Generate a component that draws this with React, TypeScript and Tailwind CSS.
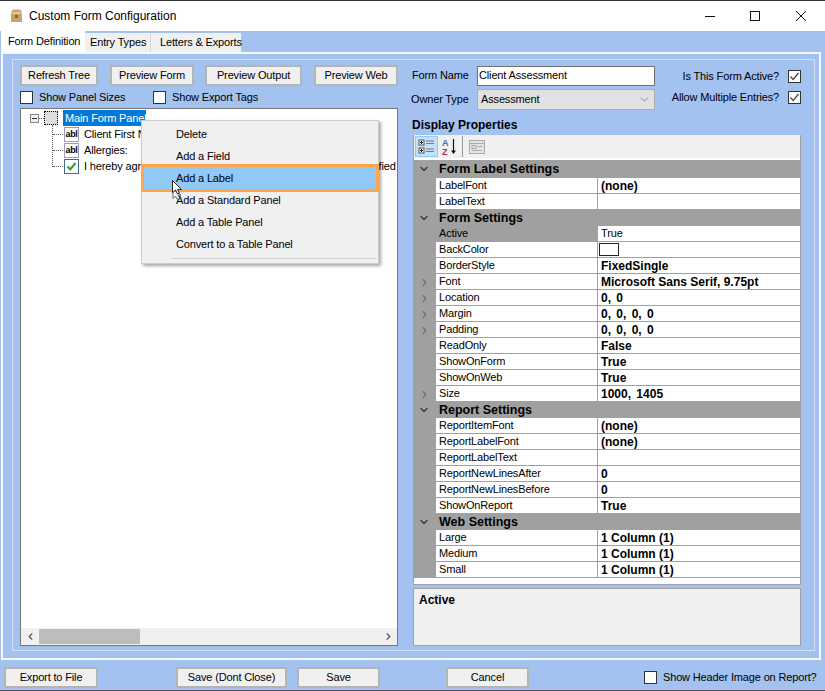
import { ChevronDown, ChevronRight, ChevronLeft } from "lucide-react"

const font = "font-['Liberation_Sans',Arial,sans-serif]"

type Row = { name: string; value?: string; bold?: boolean; num?: boolean; more?: boolean; swatch?: boolean; selected?: boolean }
type Section = { title: string; rows: Row[] }

const sections: Section[] = [
  {
    title: "Form Label Settings",
    rows: [{ name: "LabelFont", value: "(none)", bold: true }, { name: "LabelText" }],
  },
  {
    title: "Form Settings",
    rows: [
      { name: "Active", value: "True", selected: true },
      { name: "BackColor", swatch: true },
      { name: "BorderStyle", value: "FixedSingle", bold: true },
      { name: "Font", value: "Microsoft Sans Serif, 9.75pt", bold: true, more: true },
      { name: "Location", value: "0, 0", bold: true, num: true, more: true },
      { name: "Margin", value: "0, 0, 0, 0", bold: true, num: true, more: true },
      { name: "Padding", value: "0, 0, 0, 0", bold: true, num: true, more: true },
      { name: "ReadOnly", value: "False", bold: true },
      { name: "ShowOnForm", value: "True", bold: true },
      { name: "ShowOnWeb", value: "True", bold: true },
      { name: "Size", value: "1000, 1405", bold: true, num: true, more: true },
    ],
  },
  {
    title: "Report Settings",
    rows: [
      { name: "ReportItemFont", value: "(none)", bold: true },
      { name: "ReportLabelFont", value: "(none)", bold: true },
      { name: "ReportLabelText" },
      { name: "ReportNewLinesAfter", value: "0", bold: true },
      { name: "ReportNewLinesBefore", value: "0", bold: true },
      { name: "ShowOnReport", value: "True", bold: true },
    ],
  },
  {
    title: "Web Settings",
    rows: [
      { name: "Large", value: "1 Column (1)", bold: true },
      { name: "Medium", value: "1 Column (1)", bold: true },
      { name: "Small", value: "1 Column (1)", bold: true },
    ],
  },
]

const menuItems = ["Delete", "Add a Field", "Add a Label", "Add a Standard Panel", "Add a Table Panel", "Convert to a Table Panel"]

function Btn({ label, className }: { label: string; className: string }) {
  return (
    <div className={`h-[21px] shrink-0 flex items-center justify-center bg-[#f0f0f0] border-2 border-[#b4b4b4] ${className}`}>
      {label}
    </div>
  )
}

function Check({ checked }: { checked?: boolean }) {
  return (
    <span className="w-[13px] h-[13px] bg-white border border-[#333] flex items-center justify-center shrink-0">
      {checked && (
        <svg width="11" height="11" viewBox="0 0 11 11">
          <path d="M1.5 5.5 L4.2 8.5 L9.5 2" fill="none" stroke="#444" strokeWidth="1.2" />
        </svg>
      )}
    </span>
  )
}

function AblIcon() {
  return (
    <span className="w-[15px] h-[15px] border border-[#9a9ac8] bg-white flex items-center justify-center text-[9px] font-bold tracking-[-0.3px] leading-none text-black shrink-0">
      abl
    </span>
  )
}

function TreeRow({ icon, label }: { icon: React.ReactNode; label: string }) {
  return (
    <div className="h-4 flex items-center pl-[32px] whitespace-nowrap">
      <span className="w-[10px] shrink-0 border-t border-dotted border-[#666] mr-[1px]" />
      {icon}
      <span className="ml-[5px]">{label}</span>
    </div>
  )
}

function PropGrid() {
  return (
    <div className="h-[450px] bg-white border-b border-x border-[#a0a0a0] flex flex-col">
      <div className="h-[23px] bg-[#f0f0f0] flex items-center pl-px shrink-0">
        <div className="w-[23px] h-[21px] bg-[#c4e1f8] border border-[#90c8f6] flex items-center justify-center">
          <svg width="17" height="15" viewBox="0 0 17 15">
            <rect x="1" y="1" width="5" height="5" fill="#fff" stroke="#555" />
            <rect x="1" y="9" width="5" height="5" fill="#fff" stroke="#555" />
            <path d="M2 3.5h3M3.5 2v3M2 11.5h3M3.5 10v3" stroke="#222" />
            <path d="M8 2h8M8 4.5h8M8 10h8M8 12.5h8" stroke="#6b7c93" />
          </svg>
        </div>
        <div className="w-[22px] h-[21px] flex items-center justify-center">
          <svg width="17" height="18" viewBox="0 0 17 18">
            <text x="1" y="8" fontSize="9" fontWeight="700" fill="#3b6fb5" fontFamily="Liberation Sans">A</text>
            <text x="1" y="17" fontSize="9" fontWeight="700" fill="#a0354a" fontFamily="Liberation Sans">Z</text>
            <path d="M12.5 1v14" stroke="#111" strokeWidth="1.2" />
            <path d="M10 12.5l2.5 3.5 2.5-3.5z" fill="#111" />
          </svg>
        </div>
        <span className="w-px h-[21px] bg-[#999] ml-[2px]" />
        <div className="w-[22px] h-[21px] ml-[3px] flex items-center justify-center">
          <svg width="16" height="14" viewBox="0 0 16 14">
            <rect x="0.5" y="0.5" width="15" height="13" fill="#e4e4e4" stroke="#aaa" />
            <path d="M0.5 3.5h15" stroke="#aaa" />
            <rect x="3" y="5.5" width="4" height="3" fill="none" stroke="#aaa" />
            <path d="M8.5 6.5h5M3 10.5h10" stroke="#aaa" />
          </svg>
        </div>
      </div>
      <div className="mt-[2px]">
        {sections.map((s, i) => (
          <div key={s.title}>
            <div className={`${i === 0 ? "h-[18px]" : "h-4"} bg-[#a0a0a0] flex items-center font-bold text-[12.5px] tracking-normal text-black`}>
              <span className="w-[25px] pr-[6px] flex justify-center">
                <ChevronDown size={12} strokeWidth={2.5} className="text-[#333]" />
              </span>
              {s.title}
            </div>
            {s.rows.map((r) => (
              <div key={r.name} className="h-4 flex bg-[#a0a0a0]">
                <span className="w-[22px] pr-[2px] flex items-center justify-center shrink-0">
                  {r.more && <ChevronRight size={11} strokeWidth={2.5} className="text-[#6e6e6e]" />}
                </span>
                <span className={`w-[161px] pl-[3px] flex items-center border-b border-[#a0a0a0] ${r.selected ? "bg-[#a0a0a0]" : "bg-white"}`}>
                  {r.name}
                </span>
                <span className={`flex-1 ml-px pl-[3px] flex items-center border-b border-[#a0a0a0] bg-white ${r.bold ? "font-bold text-[12px] tracking-normal" : ""} ${r.num ? "[word-spacing:2px]" : ""}`}>
                  {r.swatch ? <span className="w-5 h-[13px] bg-white border border-[#222] -ml-[2px]" /> : r.value}
                </span>
              </div>
            ))}
          </div>
        ))}
      </div>
    </div>
  )
}

export default function App() {
  return (
    <div className={`relative w-[825px] h-[691px] overflow-hidden bg-[#a4c2ef] flex flex-col border-t border-[#333] border-b border-b-[#555] text-[11px] tracking-[-0.15px] text-black ${font}`}>
      <div className="h-[30px] bg-white flex items-center pl-[10px] shrink-0">
        <svg width="13" height="14" viewBox="0 0 13 14">
          <path d="M1 3 L3 0.5 H10 L12 3 V13 H1 Z" fill="#c9a468" />
          <path d="M1 3 H12 V5 H1 Z" fill="#e2c997" />
          <rect x="5" y="6" width="3" height="3" fill="#8a6a38" />
        </svg>
        <span className="ml-[6px] text-[12px] tracking-normal">Custom Form Configuration</span>
        <div className="ml-auto flex items-center pr-[19px]">
          <svg width="10" height="10" viewBox="0 0 10 10"><path d="M0 5.5h10" stroke="#111" /></svg>
          <svg className="ml-[35px]" width="10" height="10" viewBox="0 0 10 10"><rect x="0.5" y="0.5" width="9" height="9" fill="none" stroke="#111" /></svg>
          <svg className="ml-[36px]" width="10" height="10" viewBox="0 0 10 10"><path d="M0 0L10 10M10 0L0 10" stroke="#111" /></svg>
        </div>
      </div>

      <div className="h-[21px] flex items-end pl-px shrink-0 whitespace-nowrap">
        <div className="w-[84px] h-[21px] bg-white flex items-center pl-[7px]">Form Definition</div>
        <div className="w-[66px] h-[19px] bg-[#f0f0f0] border-r border-[#d8d8d8] flex items-center pl-[5px]">Entry Types</div>
        <div className="w-[90px] h-[19px] bg-[#f0f0f0] flex items-center pl-[9px]">Letters &amp; Exports</div>
      </div>

      <div className="w-[820px] h-[608px] ml-px border-2 border-[#f4f7fd] pl-[9px] pr-[4px] pt-[5px] pb-[7px] shrink-0">
        <div className="h-full border border-[#d2e0f7] pl-[7px] pr-[13px] pt-[5px] pb-[4px] flex">
          <div className="w-[378px] flex flex-col">
            <div className="flex">
              <Btn label="Refresh Tree" className="w-[78px]" />
              <Btn label="Preview Form" className="w-[84px] ml-[12px]" />
              <Btn label="Preview Output" className="w-[97px] ml-[11px]" />
              <Btn label="Preview Web" className="w-[84px] ml-[12px]" />
            </div>
            <div className="flex items-center h-[13px] mt-[5px]">
              <Check />
              <span className="ml-[6px] w-[114px]">Show Panel Sizes</span>
              <Check />
              <span className="ml-[6px]">Show Export Tags</span>
            </div>
            <div className="mt-[4px] flex-1 bg-white border border-[#777] flex flex-col overflow-hidden">
              <div className="flex-1 relative pt-[1px] overflow-hidden">
                <div className="h-4 flex items-center pl-[9px]">
                  <span className="w-[9px] h-[9px] border border-[#888] bg-[#eee] flex items-center justify-center">
                    <span className="w-[5px] h-px bg-[#333]" />
                  </span>
                  <span className="w-[5px] border-t border-dotted border-[#666]" />
                  <span className="w-[14px] h-[14px] border border-dotted border-black bg-[#ddd]" />
                  <span className="ml-[5px] w-[83px] h-[16px] bg-[#0078d7] text-white pl-[2px] flex items-center whitespace-nowrap">Main Form Panel</span>
                </div>
                <div className="absolute left-[31px] top-[16px] h-[42px] border-l border-dotted border-[#666]" />
                <TreeRow icon={<AblIcon />} label="Client First Name:" />
                <TreeRow icon={<AblIcon />} label="Allergies:" />
                <TreeRow
                  icon={
                    <span className="w-[15px] h-[15px] border border-[#3d6c8c] bg-white flex items-center justify-center shrink-0">
                      <svg width="11" height="11" viewBox="0 0 11 11">
                        <path d="M1.5 5.5 L4.2 8.5 L9.5 2" fill="none" stroke="#2e9e3a" strokeWidth="2" />
                      </svg>
                    </span>
                  }
                  label="I hereby agree that all the information I have given here is certified"
                />
              </div>
              <div className="h-[17px] bg-[#f0f0f0] flex items-center shrink-0">
                <span className="w-[18px] flex justify-center"><ChevronLeft size={11} strokeWidth={2.5} className="text-[#555]" /></span>
                <span className="w-[101px] h-[15px] bg-[#bdbdbd]" />
                <span className="ml-auto w-[17px] flex justify-center"><ChevronRight size={11} strokeWidth={2.5} className="text-[#555]" /></span>
              </div>
            </div>
          </div>

          <div className="ml-[14px] flex-1 flex flex-col">
            <div className="flex">
              <div className="w-[243px] shrink-0">
                <div className="h-[21px] flex items-center">
                  <span className="w-[65px]">Form Name</span>
                  <span className="w-[178px] h-[20px] bg-white border border-[#6f6f6f] flex items-center pl-px">Client Assessment</span>
                </div>
                <div className="h-[21px] mt-[3px] flex items-center">
                  <span className="w-[65px] -ml-px mr-px">Owner Type</span>
                  <span className="w-[178px] h-[21px] bg-[#e1e1e1] border border-[#adadad] flex items-center pl-[3px]">
                    Assessment
                    <ChevronDown size={13} strokeWidth={1.2} className="ml-auto mr-[3px] text-[#555]" />
                  </span>
                </div>
              </div>
              <div className="flex-1 flex flex-col items-end whitespace-nowrap">
                <div className="h-[21px] mt-[1px] flex items-center">
                  Is This Form Active?<span className="ml-[9px]"><Check checked /></span>
                </div>
                <div className="h-[21px] flex items-center">
                  Allow Multiple Entries?<span className="ml-[9px]"><Check checked /></span>
                </div>
              </div>
            </div>
            <div className="mt-[6px] h-[18px] flex items-center font-bold text-[12px] tracking-normal">Display Properties</div>
            <div className="mt-px ml-px"><PropGrid /></div>
            <div className="mt-[3px] ml-px flex-1 bg-[#f0f0f0] border border-[#a0a0a0] px-[5px] pt-[2px] font-bold text-[12px] tracking-normal">Active</div>
          </div>
        </div>
      </div>

      <div className="flex-1 flex pt-[7px] pl-[4px]">
        <Btn label="Export to File" className="w-[94px]" />
        <Btn label="Save (Dont Close)" className="w-[111px] ml-[78px]" />
        <Btn label="Save" className="w-[83px] ml-[10px]" />
        <Btn label="Cancel" className="w-[83px] ml-[66px]" />
        <div className="h-[21px] flex items-center ml-[115px] whitespace-nowrap">
          <Check />
          <span className="ml-[6px]">Show Header Image on Report?</span>
        </div>
      </div>

      <div className="absolute left-[141px] top-[119px] w-[238px] h-[144px] bg-[#f0f0f0] border border-[#ccc] shadow-[2px_2px_3px_rgba(0,0,0,0.35)] pt-[2px]">
        {menuItems.map((m) => (
          <div key={m} className={`relative h-[22px] pl-[34px] flex items-center ${m === "Add a Label" ? "bg-[#90c8f6]" : ""}`}>
            {m === "Add a Label" && <span className="absolute -left-px -right-px -top-[3px] -bottom-[3px] border-[3px] border-[#ffa64d]" />}
            <span className="relative">{m}</span>
          </div>
        ))}
        <div className="mt-[3px] ml-[30px] mr-[2px] h-px bg-[#d0d0d0]" />
      </div>

      <svg className="absolute left-[172px] top-[179px]" width="13" height="20" viewBox="0 0 13 20">
        <path d="M1 9.5 V18.5 L3.5 16 L5 19 L8 19 L6 15 H9 Z" fill="#fff" stroke="#444" strokeWidth="0.8" />
        <path d="M0.5 0.5 V12.5 L3.5 10 L5.5 14 L7.5 13 L5.5 9.5 H9.5 Z" fill="#fff" stroke="#222" strokeWidth="1" />
      </svg>
    </div>
  )
}
